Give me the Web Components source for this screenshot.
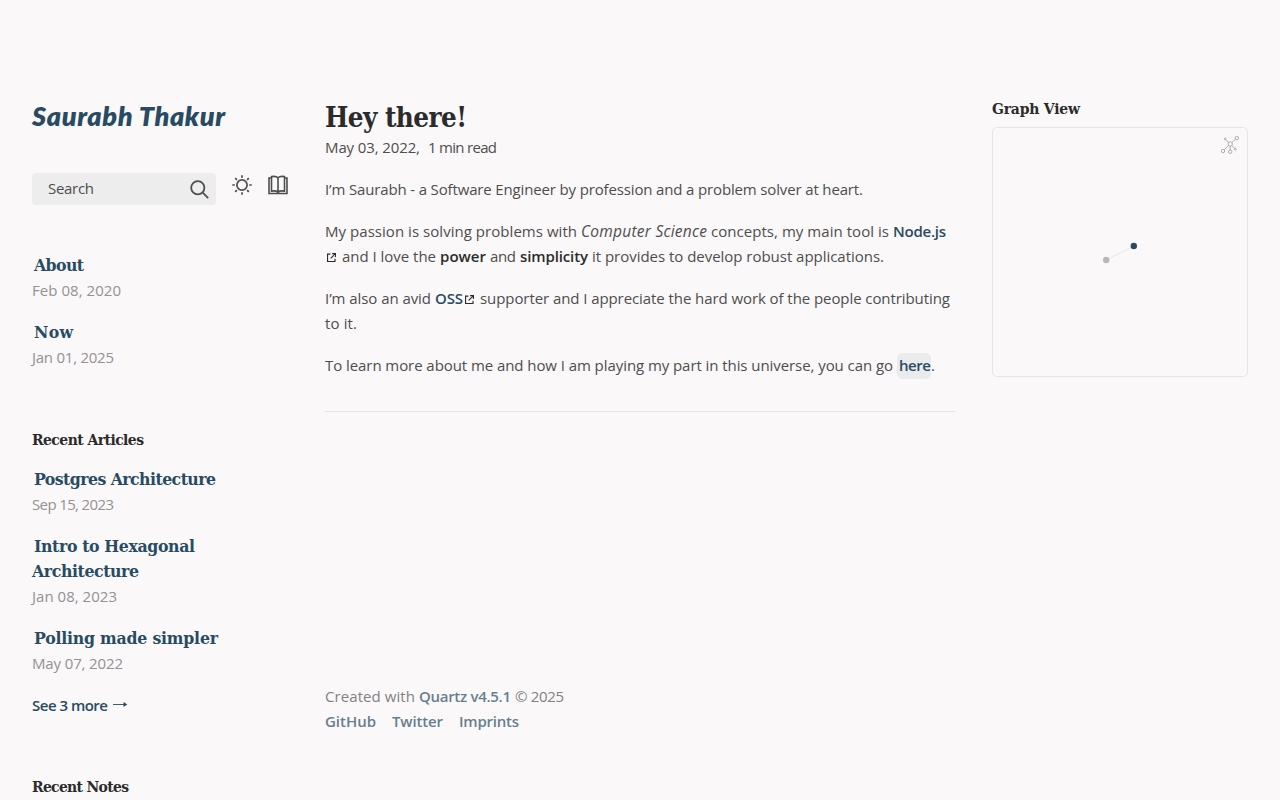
<!DOCTYPE html>
<html lang="en">
<head>
<meta charset="utf-8">
<title>Saurabh Thakur</title>
<style>
  html {
    --light: #faf8f8;
    --lightgray: #e5e5e5;
    --gray: #b8b8b8;
    --darkgray: #4e4e4e;
    --dark: #2b2b2b;
    --secondary: #284b63;
    --header: "DejaVu Serif Condensed", "DejaVu Serif", serif;
    height: 100%;
    overflow: hidden;
  }

  body {
    margin: 0;
    height: 100%;
    overflow: hidden;
    background: var(--light);
    color: var(--darkgray);
    font: 15px/25.6px "Open Sans", "Noto Sans", sans-serif;
  }
</style>
</head>
<body>
<garden-page>
  <side-bar slot="left">
    <search-bar slot="tools"></search-bar>
    <note-list slot="pages">
      <note-item date="Feb 08, 2020" date-width="89"><fit-text width="50">About</fit-text></note-item>
      <note-item date="Jan 01, 2025" date-width="82"><fit-text width="39">Now</fit-text></note-item>
    </note-list>
    <note-list slot="articles" heading="Recent Articles" heading-width="112">
      <note-item date="Sep 15, 2023" date-width="82"><fit-text width="182">Postgres Architecture</fit-text></note-item>
      <note-item date="Jan 08, 2023" date-width="85"><fit-text width="161">Intro to Hexagonal</fit-text><fit-text class="next" width="107">Architecture</fit-text></note-item>
      <note-item date="May 07, 2022" date-width="91"><fit-text width="184">Polling made simpler</fit-text></note-item>
    </note-list>
    <note-list slot="notes" heading="Recent Notes" heading-width="97"></note-list>
  </side-bar>
  <note-article slot="center"></note-article>
  <page-footer slot="center"></page-footer>
  <graph-view slot="right"></graph-view>
</garden-page>

<script>
const attach = (el, html) => {
  el.attachShadow({ mode: "open" }).innerHTML = html;
};

class GardenPage extends HTMLElement {
  constructor() {
    super();
    attach(this, `
      <style>
        :host {
          display: grid;
          grid-template-columns: 256px 630px 256px;
          column-gap: 37px;
          box-sizing: border-box;
          height: 800px;
          padding: 96px 32px 0;
        }
        .center { display: flex; flex-direction: column; justify-content: space-between; padding-bottom: 66px; }
      </style>
      <slot name="left"></slot>
      <div class="center"><slot name="center"></slot></div>
      <slot name="right"></slot>
    `);
  }
}

class SideBar extends HTMLElement {
  constructor() {
    super();
    attach(this, `
      <style>
        :host { display: flex; flex-direction: column; height: 704px; }
        h2 {
          margin: 0 0 37px;
          color: var(--secondary);
          font: italic 800 27px/40px Lato, sans-serif;
        }
        .pages { margin-top: 48px; }
        .articles { margin-top: 58px; }
        .more { margin-top: 17px; color: var(--secondary); font-weight: 600; display: flex; gap: 4px; align-items: center; }
        .more svg { display: block; }
        .notes { margin-top: 57px; }
      </style>
      <h2><fit-text width="193">Saurabh Thakur</fit-text></h2>
      <slot name="tools"></slot>
      <div class="pages"><slot name="pages"></slot></div>
      <div class="articles"><slot name="articles"></slot></div>
      <div class="more">
        <fit-text width="76">See 3 more</fit-text>
        <svg width="16" height="8" viewBox="0 0 16 8"><path d="M1 3.5h13" stroke="currentColor" stroke-width=".9"/><path d="M11.5 1l3.8 2.5L11.5 6z" fill="currentColor"/></svg>
      </div>
      <div class="notes"><slot name="notes"></slot></div>
    `);
  }
}

class SearchBar extends HTMLElement {
  constructor() {
    super();
    attach(this, `
      <style>
        :host { display: flex; flex-shrink: 0; height: 32px; }
        .search {
          display: flex;
          align-items: center;
          justify-content: space-between;
          box-sizing: border-box;
          width: 184px;
          padding: 0 7px 0 16px;
          border-radius: 4px;
          background: #ededed;
        }
        svg { display: block; fill: none; stroke: var(--darkgray); }
        .theme { margin: 2px 0 0 16px; }
        .reader { margin: 2px 0 0 16px; }
      </style>
      <div class="search">
        <fit-text width="46">Search</fit-text>
        <svg width="19" height="19" viewBox="0 0 19 19" stroke-width="1.8"><circle cx="7.8" cy="7.7" r="6.6"/><path d="M12.7 12.6l5.500 5.500"/></svg>
      </div>
      <svg class="theme" width="20" height="20" viewBox="0 0 20 20" stroke-width="1.7"><circle cx="10" cy="10" r="5.1"/><path d="M10 .3v2.500M10 17.200v2.500M.3 10h2.500M17.200 10h2.500M3.200 3.200l1.700 1.700M15.100 15.100l1.700 1.700M3.200 16.800l1.700-1.700M15.100 4.900l1.700-1.700"/></svg>
      <svg class="reader" width="20" height="20" viewBox="0 0 20 20" stroke-width="1.6"><path d="M3.500 3H1v15.500h18V3h-2.500M10 2.800C8.500 1.300 5.500 1.300 3.500 1.600v14.500c2.500-.4 5-.2 6.500 1 1.500-1.200 4-1.400 6.500-1V1.600c-2-.3-5-.3-6.500 1.200zM10 2.800v14.500"/></svg>
    `);
  }
}

class NoteList extends HTMLElement {
  constructor() {
    super();
    const heading = this.getAttribute("heading");
    attach(this, `
      <style>
        :host { display: block; }
        h3 { margin: 0 0 16px; color: var(--dark); font: bold 15.5px/23px var(--header); }
        .items { display: flex; flex-direction: column; gap: 17.6px; }
      </style>
      ${heading ? `<h3><fit-text width="${this.getAttribute("heading-width")}">${heading}</fit-text></h3>` : ""}
      <div class="items"><slot></slot></div>
    `);
  }
}

class NoteItem extends HTMLElement {
  constructor() {
    super();
    attach(this, `
      <style>
        :host { display: block; line-height: 24.8px; }
        .title {
          display: flex;
          flex-direction: column;
          padding-left: 2px;
          color: var(--secondary);
          font: bold 17.5px/24.8px var(--header);
        }
        ::slotted(.next) { margin-left: -2px; }
        .date { color: #949292; }
      </style>
      <div class="title"><slot></slot></div>
      <div class="date"><fit-text width="${this.getAttribute("date-width")}">${this.getAttribute("date")}</fit-text></div>
    `);
  }
}

const external = `<svg class="ext" width="9" height="9" viewBox="0 0 512 512"><path d="M320 0H288V64h32 82.700L201.400 265.400 178.700 288 224 333.300l22.600-22.600L448 109.300V192v32h64V192 32 0H480 320zM32 32H0V64 480v32H32 456h32V480 352 320H424v32 96H64V96h96 32V32H160 32z"/></svg>`;

class NoteArticle extends HTMLElement {
  constructor() {
    super();
    attach(this, `
      <style>
        :host { display: block; }
        h1 { margin: 0 0 -3px; color: var(--dark); font: bold 27.5px/42px var(--header); }
        .meta { display: flex; gap: 8px; margin-bottom: 16.500px; }
        p { margin: 0 0 16px; }
        .line { display: flex; gap: 4px; }
        em { font-style: italic; font-size: 15.5px; }
        b { font-weight: 600; color: var(--dark); }
        a { font-weight: 600; color: var(--secondary); }
        .ext { display: block; margin: 9px 2px 0 2px; fill: var(--dark); }
        .link { display: flex; }
        .link .ext { margin-left: 2px; margin-right: 2px; }
        .internal { padding: 0 0 0 2px; margin-right: -4px; border-radius: 5px; background: rgba(143, 159, 169, .15); }
        hr { margin: 32px 0 0; border: 0; border-top: 1px solid var(--lightgray); }
      </style>
      <h1><fit-text width="142">Hey there!</fit-text></h1>
      <div class="meta"><fit-text width="95">May 03, 2022,</fit-text><fit-text width="69">1 min read</fit-text></div>
      <p class="line"><fit-text width="538">I’m Saurabh - a Software Engineer by profession and a problem solver at heart.</fit-text></p>
      <p>
        <span class="line"><fit-text width="252">My passion is solving problems with</fit-text> <em><fit-text width="126">Computer Science</fit-text></em> <fit-text width="178">concepts, my main tool is</fit-text> <a><fit-text width="53">Node.js</fit-text></a></span>
        <span class="line">${external}<fit-text width="94">and I love the</fit-text> <b><fit-text width="46">power</fit-text></b> <fit-text width="26">and</fit-text> <b><fit-text width="68">simplicity</fit-text></b> <fit-text width="292">it provides to develop robust applications.</fit-text></span>
      </p>
      <p>
        <span class="line"><fit-text width="106">I’m also an avid</fit-text> <span class="link"><a><fit-text width="28">OSS</fit-text></a>${external}</span><fit-text width="470">supporter and I appreciate the hard work of the people contributing</fit-text></span>
        <span class="line"><fit-text width="32">to it.</fit-text></span>
      </p>
      <p class="line"><fit-text width="568">To learn more about me and how I am playing my part in this universe, you can go</fit-text> <a class="internal"><fit-text width="32">here</fit-text></a><fit-text width="3">.</fit-text></p>
      <hr>
    `);
  }
}

class PageFooter extends HTMLElement {
  constructor() {
    super();
    attach(this, `
      <style>
        :host { display: block; line-height: 25px; opacity: .7; }
        .line { display: flex; gap: 4px; }
        .links { display: flex; gap: 16px; }
        a { color: var(--secondary); font-weight: 600; }
      </style>
      <div class="line"><fit-text width="90">Created with</fit-text> <a><fit-text width="92">Quartz v4.5.1</fit-text></a> <fit-text width="49">© 2025</fit-text></div>
      <div class="links"><a><fit-text width="51">GitHub</fit-text></a><a><fit-text width="51">Twitter</fit-text></a><a><fit-text width="60">Imprints</fit-text></a></div>
    `);
  }
}

class GraphView extends HTMLElement {
  constructor() {
    super();
    attach(this, `
      <style>
        :host { display: block; }
        h3 { margin: 0; padding: 0 0 6px; color: var(--dark); font: bold 15.5px/25px var(--header); }
        .graph {
          position: relative;
          box-sizing: border-box;
          height: 250px;
          border: 1px solid var(--lightgray);
          border-radius: 5px;
        }
        .graph svg { display: block; }
        .graph .expand { position: absolute; top: 8px; right: 8px; fill: none; stroke: #a6a5a5; }
      </style>
      <h3><fit-text width="88">Graph View</fit-text></h3>
      <div class="graph">
        <svg width="254" height="248" viewBox="0 0 254 248">
          <path d="M113.200 132L140.800 118" stroke="#e5e5e5"/>
          <circle cx="113.200" cy="132" r="3.200" fill="#b8b8b8"/>
          <circle cx="140.800" cy="118" r="3.200" fill="#284b63"/>
        </svg>
        <svg class="expand" width="18" height="18" viewBox="0 0 18 18" stroke-width=".9">
          <circle cx="9.200" cy="8" r="2.200"/>
          <circle cx="15.800" cy="2" r="1.700"/>
          <circle cx="2" cy="15" r="1.700"/>
          <circle cx="9.200" cy="15.800" r="1.700"/>
          <circle cx="4.200" cy="2.900" r=".9"/>
          <circle cx="14.300" cy="13.200" r=".9"/>
          <path d="M14.500 3.300L10.900 6.500M7.600 9.600L3.200 13.700M9.200 10.200v3.900M4.900 3.600l2.700 2.800M10.800 9.600l2.900 2.900"/>
        </svg>
      </div>
    `);
  }
}

// One unbroken run of text, tracked so that it fills the given width
class FitText extends HTMLElement {
  constructor() {
    super();
    attach(this, `
      <style>
        :host { display: block; width: max-content; white-space: nowrap; }
      </style>
      <slot></slot>
    `);
  }

  connectedCallback() {
    const width = Number(this.getAttribute("width"));
    const gaps = this.textContent.length - 1;
    if (gaps > 0) {
      const natural = this.getBoundingClientRect().width;
      this.style.letterSpacing = `${(width - natural) / gaps}px`;
    }
    this.style.width = `${width}px`;
  }
}

customElements.define("garden-page", GardenPage);
customElements.define("side-bar", SideBar);
customElements.define("search-bar", SearchBar);
customElements.define("note-list", NoteList);
customElements.define("note-item", NoteItem);
customElements.define("note-article", NoteArticle);
customElements.define("page-footer", PageFooter);
customElements.define("graph-view", GraphView);
customElements.define("fit-text", FitText);
</script>
</body>
</html>
